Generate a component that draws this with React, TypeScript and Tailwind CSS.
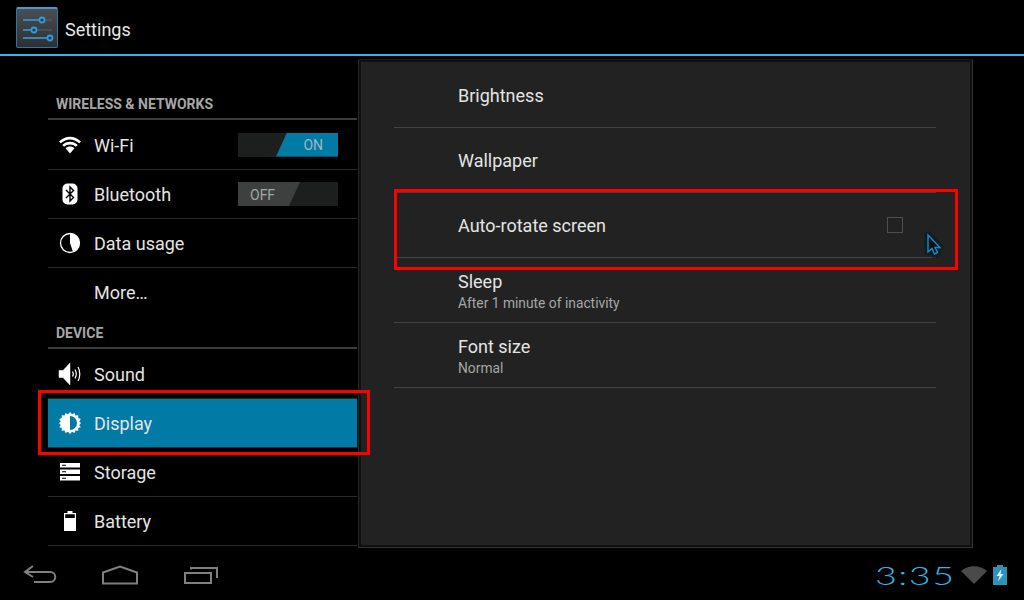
import type { ReactNode } from 'react'

const font = { fontFamily: 'Roboto, "Noto Sans", sans-serif' }

function SettingsLogo() {
  return (
    <div className="w-[42px] h-[41px] rounded-[2px] border border-[#2a76a8] border-t-2 border-t-[#3f9ad6] bg-gradient-to-b from-[#4c4f52] to-[#2d2f31] shrink-0">
      <svg width="40" height="38" viewBox="0 0 40 38" fill="none">
        <path d="M6 11H35M6 21H35M6 29H35" stroke="#5d6469" strokeWidth="1" />
        <path d="M6 11H25M6 21H17M6 29H32" stroke="#2f9be0" strokeWidth="1.300" />
        <circle cx="25" cy="11" r="2.500" fill="#34373a" stroke="#2f9be0" strokeWidth="1.800" />
        <circle cx="17" cy="21" r="2.500" fill="#34373a" stroke="#2f9be0" strokeWidth="1.800" />
        <circle cx="33" cy="29" r="2.500" fill="#34373a" stroke="#2f9be0" strokeWidth="1.800" />
      </svg>
    </div>
  )
}

const WifiIcon = (
  <svg width="22" height="18" viewBox="0 0 22 18" fill="#fff">
    <path d="M0 5.500C6.500 -0.800 15.500 -0.800 22 5.500L20.200 7.300C14.500 2.200 7.500 2.200 1.800 7.300Z" />
    <path d="M3.300 9C7.700 4.800 14.300 4.800 18.700 9L16.900 10.800C13.300 7.600 8.700 7.600 5.100 10.800Z" />
    <path d="M6.500 12.200C9 10 13 10 15.500 12.200L11 17.500Z" />
  </svg>
)

const BluetoothIcon = (
  <svg width="16" height="22" viewBox="0 0 16 22">
    <rect width="15" height="21" x="0.500" y="0.500" rx="5" fill="#fff" />
    <path d="M4 7L11.500 14.500L8 18V4L11.500 7.500L4 15" fill="none" stroke="#000" strokeWidth="1.400" />
  </svg>
)

const DataIcon = (
  <svg width="22" height="22" viewBox="0 0 22 22">
    <circle cx="11" cy="11" r="9.500" fill="none" stroke="#fff" strokeWidth="1.300" />
    <path d="M11 1.500A9.500 9.500 0 0 1 14 20L11 11Z" fill="#fff" />
  </svg>
)

const SoundIcon = (
  <svg width="24" height="24" viewBox="0 0 24 24" fill="none" stroke="#fff">
    <path d="M1 8.500H5L12 1V23L5 15.500H1Z" fill="#fff" strokeWidth="0.500" />
    <path d="M14.500 9.500C15.500 11 15.500 13 14.500 14.500" strokeWidth="1.200" />
    <path d="M17 7.500C18.600 10.300 18.600 13.700 17 16.500" strokeWidth="1.200" />
    <path d="M20 5C22.400 9 22.400 15 20 19" strokeWidth="1.200" />
  </svg>
)

const DisplayIcon = (
  <svg width="22" height="22" viewBox="0 0 22 22">
    <path
      d="M11 0L13 2.300L15.500 .9L16.500 3.500L19.300 3.200L19.200 6L21.800 7L20.300 9.400L22 11L20.300 13L21.800 15.200L19.200 16L19.300 18.800L16.500 18.500L15.500 21.100L13 19.700L11 22L9 19.700L6.500 21.100L5.500 18.500L2.700 18.800L2.800 16L.2 15.200L1.700 13L0 11L1.700 9.400L.2 7L2.800 6L2.700 3.200L5.500 3.500L6.500 .9L9 2.300Z"
      fill="#fff"
    />
    <path d="M11 4A7 7 0 0 1 11 18Z" fill="#017aa6" />
  </svg>
)

const StorageIcon = (
  <svg width="20" height="18" viewBox="0 0 20 18" fill="#fff">
    <path d="M0 0H20V4.500H0ZM0 6.500H20V11H0ZM0 13H20V17.500H0Z" />
    <path d="M2 1.800H6V2.800H2ZM2 8.300H6V9.300H2ZM2 14.800H6V15.800H2Z" fill="#000" />
  </svg>
)

const BatteryIcon = (
  <svg width="12" height="20" viewBox="0 0 12 20" fill="#fff">
    <path d="M3.500 0H8.500V2H12V20H0V2H3.500ZM1.200 3.200V7H10.800V3.200Z" fillRule="evenodd" />
  </svg>
)

function Toggle({ on }: { on: boolean }) {
  return (
    <div className="relative w-[100px] h-[24px] mr-[19px] bg-[#1c1f1e] shrink-0">
      {on ? (
        <div className="absolute inset-y-0 right-0 w-[62px] bg-[#017aa6] [clip-path:polygon(11px_0,100%_0,100%_100%,0_100%)] flex items-center justify-end pr-[15px] pt-[2px] text-[14px] text-[#9fb8c2]">
          ON
        </div>
      ) : (
        <div className="absolute inset-y-0 left-0 w-[62px] bg-[#3d403f] [clip-path:polygon(0_0,100%_0,calc(100%-11px)_100%,0_100%)] flex items-center pl-[12px] pt-[2px] text-[14px] text-[#a3a5a4]">
          OFF
        </div>
      )}
    </div>
  )
}

function NavRow({ icon, label, toggle, active, tall, plain }: { icon?: ReactNode; label: string; toggle?: ReactNode; active?: boolean; tall?: boolean; plain?: boolean }) {
  const line = active ? 'bg-[#017aa6] border-[#0c3542]' : plain ? 'border-transparent' : 'border-[#2a2a2a]'
  return (
    <div className={`${tall ? 'h-[50px]' : 'h-[49px]'} flex items-center border-b ${line}`}>
      <div className="w-[44px] flex justify-center shrink-0">{icon}</div>
      <span className={`ml-[2px] ${tall ? 'pt-[2px]' : ''} text-[18px] text-[#e4e4e4] flex-1`}>{label}</span>
      {toggle}
    </div>
  )
}

function SectionLabel({ label, className }: { label: string; className: string }) {
  return (
    <div className={`${className} flex items-end border-b-2 border-[#3c3c3c] pl-2 pb-[3px] text-[14px] font-bold text-[#a6a6a6]`}>
      {label}
    </div>
  )
}

function PanelRow({ title, sub, right }: { title: string; sub?: string; right?: ReactNode }) {
  return (
    <div className={`h-[65px] flex items-center border-b border-[#434343] pl-[64px] ${sub ? 'pt-[4px]' : 'pt-[2px]'}`}>
      <div className="flex-1">
        <div className="text-[18px] leading-[22px] text-[#e4e4e4]">{title}</div>
        {sub && <div className="text-[13.8px] leading-[20px] text-[#a6a6a6]">{sub}</div>}
      </div>
      {right}
    </div>
  )
}

export default function App() {
  return (
    <div className="relative w-[1024px] h-[600px] bg-black flex flex-col overflow-hidden" style={font}>
      {/* Action bar */}
      <header className="h-[56px] shrink-0 flex items-center gap-[7px] pl-[16px] border-b-2 border-[#33b5e5]">
        <SettingsLogo />
        <span className="pt-[4px] text-[18px] text-[#e8e8e8]">Settings</span>
      </header>

      <main className="flex-1 flex items-start pl-[48px]">
        {/* Headers list */}
        <div className="w-[309px] shrink-0">
          <SectionLabel label="WIRELESS & NETWORKS" className="h-[64px]" />
          <NavRow icon={WifiIcon} label="Wi-Fi" toggle={<Toggle on />} tall />
          <NavRow icon={BluetoothIcon} label="Bluetooth" toggle={<Toggle on={false} />} />
          <NavRow icon={DataIcon} label="Data usage" />
          <NavRow label="More…" plain />
          <SectionLabel label="DEVICE" className="h-[32px]" />
          <NavRow icon={SoundIcon} label="Sound" tall />
          <NavRow icon={DisplayIcon} label="Display" active />
          <NavRow icon={StorageIcon} label="Storage" />
          <NavRow icon={BatteryIcon} label="Battery" />
        </div>

        {/* Detail panel */}
        <div className="mt-[3px] ml-[1px] w-[615px] h-[489px] border border-[#333] border-l-[#262626] border-t-[#1a1a1a] shrink-0">
          <div className="h-full border-2 border-[#101010] bg-[#222222] pl-[33px] pr-[34px] pt-[1px]">
            <PanelRow title="Brightness" />
            <PanelRow title="Wallpaper" />
            <PanelRow
              title="Auto-rotate screen"
              right={<div className="w-[16px] h-[16px] border border-[#4e4e4e] mr-[33px] mb-[2px]" />}
            />
            <PanelRow title="Sleep" sub="After 1 minute of inactivity" />
            <PanelRow title="Font size" sub="Normal" />
          </div>
        </div>
      </main>

      {/* System bar */}
      <footer className="h-[48px] shrink-0 flex items-center pl-[23px] pr-[17px] pb-[2px]">
        <svg width="34" height="20" viewBox="0 0 34 20" fill="none" stroke="#808080" strokeWidth="2">
          <path d="M10 1L2 7L10 12" />
          <path d="M2 7H27C34 7 34 17 27 17H11" />
        </svg>
        <svg className="ml-[44px]" width="38" height="20" viewBox="0 0 38 20" fill="none" stroke="#808080" strokeWidth="2">
          <path d="M2 7.500L19 1.500L36 7.500V18.500H2Z" />
        </svg>
        <svg className="ml-[44px]" width="36" height="20" viewBox="0 0 36 20" fill="none" stroke="#808080" strokeWidth="2">
          <path d="M2 8H28V18H2Z" />
          <path d="M8 4.500V3H34V13" />
        </svg>
        <div className="ml-auto flex items-center">
          <span
            className="text-[26px] font-light leading-none text-[#33b5e5] tracking-[1px] origin-right scale-x-[1.45] scale-y-[0.95]"
            style={{ fontFamily: 'Lato, sans-serif' }}
          >
            3:35
          </span>
          <svg className="ml-[6px]" width="26" height="18" viewBox="0 0 26 18">
            <path d="M0 5C7 -1.500 19 -1.500 26 5L13 18Z" fill="#4a4a4a" />
          </svg>
          <svg className="ml-[6px]" width="14" height="20" viewBox="0 0 14 20">
            <path d="M4 0H10V2H14V20H0V2H4Z" fill="#2f93b8" />
            <path d="M8.500 4L3.500 11H6.500L5 16.500L10.500 9H7.500Z" fill="#d8eef6" />
          </svg>
        </div>
      </footer>

      {/* Red annotations and pointer, over the page */}
      <div className="absolute left-[38px] top-[390px] w-[332px] h-[65px] border-[3px] border-[#ff0000]" />
      <div className="absolute left-[394px] top-[189px] w-[564px] h-[81px] border-[3px] border-[#ff0000]" />
      <svg className="absolute left-[920px] top-[228px]" width="28" height="32" viewBox="0 0 28 32">
        <path d="M8 7V24L12 20.500L14.500 26L17.500 24.500L15 19.500H20Z" fill="#141c20" stroke="#141c20" strokeWidth="7" strokeLinejoin="round" />
        <path d="M8 7V24L12 20.500L14.500 26L17.500 24.500L15 19.500H20Z" fill="#06141c" stroke="#1f86c4" strokeWidth="1.400" />
      </svg>
    </div>
  )
}
